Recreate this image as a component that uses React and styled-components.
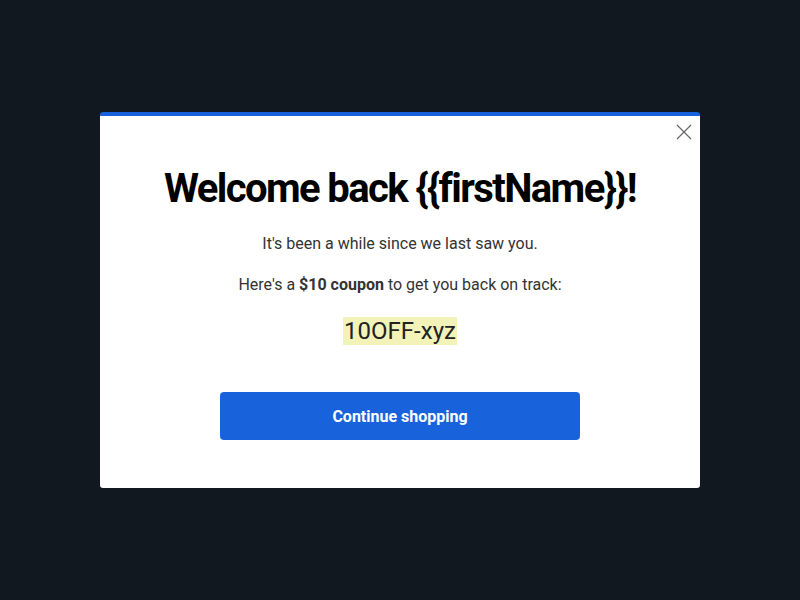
import React from "react";
import styled, { createGlobalStyle } from "styled-components";

const GlobalStyle = createGlobalStyle`
  html, body {
    margin: 0;
    height: 100%;
    background: #111820;
    font-family: Roboto, "Liberation Sans", sans-serif;
  }
  #root {
    height: 100%;
  }
`;

const Backdrop = styled.div`
  height: 100%;
  display: flex;
  align-items: center;
  justify-content: center;
`;

const Modal = styled.div`
  position: relative;
  width: 600px;
  box-sizing: border-box;
  background: #fff;
  border-top: 4px solid #1863dc;
  border-radius: 3px;
  padding: 49px 40px 48px;
  display: flex;
  flex-direction: column;
  align-items: center;
  text-align: center;
`;

const Close = styled.button`
  position: absolute;
  top: 8px;
  right: 8px;
  width: 16px;
  height: 16px;
  padding: 0;
  border: 0;
  background: none;
  cursor: pointer;
  color: #666;
`;

const Title = styled.h1`
  margin: 0;
  font-size: 40px;
  line-height: 48px;
  font-weight: 700;
  letter-spacing: -1.6px;
  color: #000;
`;

const Text = styled.p`
  margin: ${(p) => p.$top || 0}px 0 0;
  font-size: 16px;
  line-height: 22px;
  color: #333;
`;

const Code = styled.span`
  margin-top: 21px;
  display: inline-block;
  background: #f2f2b9;
  padding: 0 1px;
  font-size: 24px;
  line-height: 28px;
  color: #222;
`;

const Button = styled.button`
  margin-top: 47px;
  width: 360px;
  height: 48px;
  border: 0;
  border-radius: 4px;
  background: #1863dc;
  color: #fff;
  font-family: inherit;
  font-size: 16px;
  font-weight: 700;
  cursor: pointer;
`;

const App = () => (
  <>
    <GlobalStyle />
    <Backdrop>
      <Modal>
        <Close aria-label="Close">
          <svg width="16" height="16" viewBox="0 0 16 16">
            <path d="M1 1L15 15M15 1L1 15" stroke="currentColor" strokeWidth="1.2" />
          </svg>
        </Close>
        <Title>Welcome back {"{{firstName}}"}!</Title>
        <Text $top={20}>It's been a while since we last saw you.</Text>
        <Text $top={19}>
          Here's a <b>$10 coupon</b> to get you back on track:
        </Text>
        <Code>10OFF-xyz</Code>
        <Button>Continue shopping</Button>
      </Modal>
    </Backdrop>
  </>
);

export default App;
